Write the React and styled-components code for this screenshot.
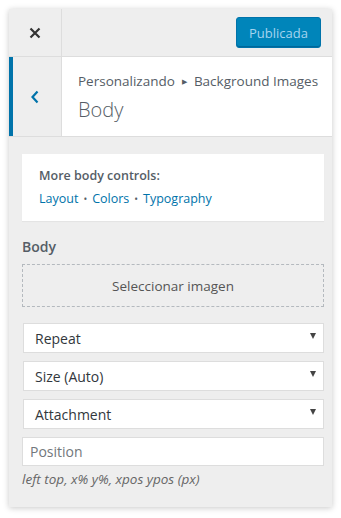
import React from 'react';
import styled, { createGlobalStyle } from 'styled-components';

const Global = createGlobalStyle`
  html, body {
    margin: 0;
    padding: 0;
    background: #fff;
    font-family: "Open Sans", "Noto Sans", sans-serif;
  }
`;

const Page = styled.div`
  padding: 9px 9px 11px 9px;
  width: 341px;
  height: 518px;
  box-sizing: border-box;
`;

const Panel = styled.div`
  width: 323px;
  height: 498px;
  background: #eee;
  box-shadow: 0 1px 6px rgba(0, 0, 0, 0.22);
  display: flex;
  flex-direction: column;
`;

const TopBar = styled.div`
  display: flex;
  height: 48px;
  border-bottom: 1px solid #ddd;
  box-sizing: border-box;
`;

const CloseBox = styled.div`
  width: 52px;
  border-right: 1px solid #ddd;
  display: flex;
  align-items: center;
  justify-content: center;
`;

const TopRight = styled.div`
  flex: 1;
  display: flex;
  justify-content: flex-end;
  align-items: flex-start;
  padding: 8px 11px 0 0;
`;

const PublishButton = styled.button`
  background: #0085ba;
  border: 1px solid #0073aa;
  border-radius: 3px;
  color: #a5d4ef;
  font-family: inherit;
  font-size: 13px;
  height: 31px;
  width: 85px;
  padding: 0;
  box-shadow: inset 0 -1px 0 #006799;
`;

const SectionHead = styled.div`
  display: flex;
  height: 80px;
  border-bottom: 1px solid #ddd;
  box-sizing: border-box;
`;

const BackBox = styled.div`
  width: 53px;
  border-left: 4px solid #0073aa;
  box-sizing: border-box;
  display: flex;
  align-items: center;
  justify-content: center;
  padding-right: 4px;
  border-right: 1px solid #ddd;
`;

const TitleBox = styled.div`
  flex: 1;
  background: #fff;
  padding: 14px 0 0 16px;
`;

const Crumb = styled.div`
  font-size: 13.5px;
  color: #555d66;
  line-height: 20px;
`;

const Sep = styled.span`
  font-size: 7px;
  margin: 0 7px;
  vertical-align: 2px;
`;

const Title = styled.h2`
  margin: 5px 0 0;
  font-size: 20px;
  font-weight: 300;
  color: #555d66;
  line-height: 26px;
`;

const Content = styled.div`
  padding: 17px 8px 0 13px;
  display: flex;
  flex-direction: column;
`;

const InfoCard = styled.div`
  background: #fff;
  height: 67px;
  box-sizing: border-box;
  padding: 13px 17px;
  box-shadow: 0 1px 1px rgba(0, 0, 0, 0.04);
`;

const InfoTitle = styled.div`
  font-size: 12.5px;
  font-weight: 600;
  color: #555d66;
  line-height: 18px;
`;

const Links = styled.div`
  font-size: 12.5px;
  line-height: 18px;
  margin-top: 5px;
  color: #555d66;

  a {
    color: #0073aa;
    text-decoration: none;
  }
`;

const Dot = styled.span`
  margin: 0 5px;
  font-size: 10px;
`;

const Label = styled.div`
  font-size: 14px;
  font-weight: 600;
  color: #555d66;
  margin-top: 16px;
  line-height: 20px;
`;

const UploadBox = styled.div`
  margin-top: 7px;
  height: 43px;
  border: 1px dashed #b4b9be;
  box-sizing: border-box;
  display: flex;
  align-items: center;
  justify-content: center;
  font-size: 13.5px;
  color: #555;
`;

const Select = styled.div`
  margin: ${p => p.$first ? '16px' : '8px'} 0 0 1px;
  height: 30px;
  background: #fff;
  border: 1px solid #ddd;
  box-sizing: border-box;
  display: flex;
  align-items: center;
  justify-content: space-between;
  padding: 0 7px 0 11px;
  font-size: 14px;
  color: #32373c;
`;

const Arrow = styled.span`
  width: 0;
  height: 0;
  border-left: 3px solid transparent;
  border-right: 3px solid transparent;
  border-top: 6px solid #444;
  margin-top: -4px;
`;

const Input = styled.div`
  margin-top: 8px;
  height: 29px;
  background: #fff;
  border: 1px solid #ddd;
  box-sizing: border-box;
  display: flex;
  align-items: center;
  padding: 0 7px;
  font-size: 14px;
  color: #72777c;
`;

const Help = styled.div`
  margin-top: 3px;
  font-size: 13.5px;
  font-style: italic;
  color: #666;
  line-height: 20px;
`;

export default function App() {
  return (
    <Page>
      <Global />
      <Panel>
        <TopBar>
          <CloseBox>
            <svg width="12" height="12" viewBox="0 0 12 12">
              <path d="M1.5 1.5 L10.5 10.5 M10.5 1.5 L1.5 10.5" stroke="#333" strokeWidth="2.2" />
            </svg>
          </CloseBox>
          <TopRight>
            <PublishButton>Publicada</PublishButton>
          </TopRight>
        </TopBar>
        <SectionHead>
          <BackBox>
            <svg width="10" height="14" viewBox="0 0 10 14">
              <path d="M7.5 1.5 L2.5 7 L7.5 12.5" stroke="#0073aa" strokeWidth="2.2" fill="none" />
            </svg>
          </BackBox>
          <TitleBox>
            <Crumb>Personalizando<Sep>▶</Sep>Background Images</Crumb>
            <Title>Body</Title>
          </TitleBox>
        </SectionHead>
        <Content>
          <InfoCard>
            <InfoTitle>More body controls:</InfoTitle>
            <Links>
              <a href="#">Layout</a><Dot>•</Dot><a href="#">Colors</a><Dot>•</Dot><a href="#">Typography</a>
            </Links>
          </InfoCard>
          <Label>Body</Label>
          <UploadBox>Seleccionar imagen</UploadBox>
          <Select $first>Repeat<Arrow /></Select>
          <Select>Size (Auto)<Arrow /></Select>
          <Select>Attachment<Arrow /></Select>
          <Input>Position</Input>
          <Help>left top, x% y%, xpos ypos (px)</Help>
        </Content>
      </Panel>
    </Page>
  );
}
